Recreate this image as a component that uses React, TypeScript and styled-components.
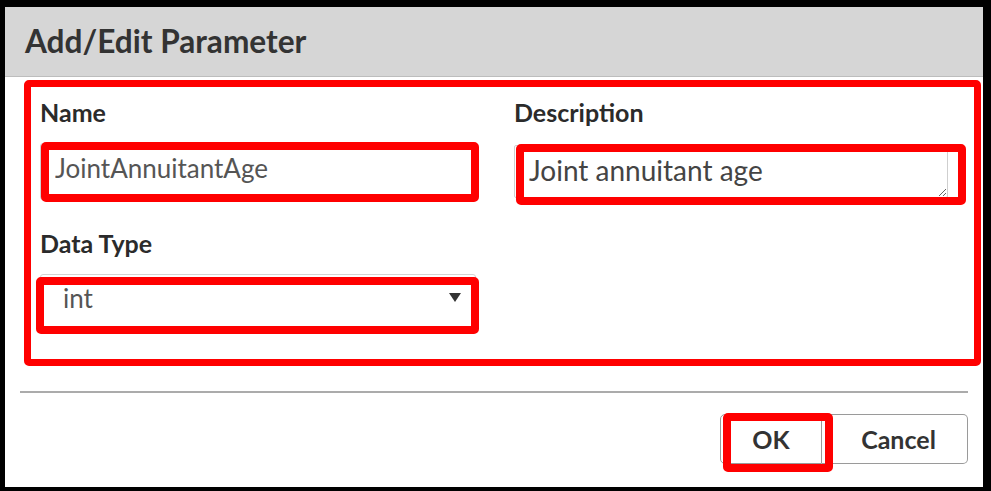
import React from "react";
import styled, { createGlobalStyle } from "styled-components";

const Global = createGlobalStyle`
  html, body { margin: 0; padding: 0; background: #000; }
  body { font-family: Lato, "Open Sans", Arial, sans-serif; }
  * { box-sizing: border-box; }
`;

const Screen = styled.div`
  width: 991px;
  height: 491px;
  padding: 7px 8px 4px 5px;
  background: #000;
`;

const Modal = styled.div`
  height: 480px;
  background: #fff;
  display: flex;
  flex-direction: column;
`;

const Header = styled.div`
  height: 70px;
  flex: none;
  background: #d6d6d6;
  border-bottom: 1px solid #bdbdbd;
  display: flex;
  align-items: center;
  padding: 0 20px 1px;
`;

const Title = styled.h1`
  margin: 0;
  font-size: 31.6px;
  font-weight: 700;
  color: #333;
`;

const Frame = styled.div`
  margin: 3px 2px 0 19px;
  border: 7px solid #ff0000;
  border-radius: 5px;
  padding: 11px 0 28px 9px;
  display: grid;
  grid-template-columns: 436px 434px;
  column-gap: 38px;
  row-gap: 29px;
`;

const Field = styled.div`
  display: flex;
  flex-direction: column;
`;

const Label = styled.label`
  font-size: 25px;
  line-height: 29px;
  font-weight: 700;
  color: #2b2b2b;
  margin-bottom: 16px;
`;

type Inset = { $t: number; $l: number; $r: number; $b: number };

const Marked = styled.div<Inset>`
  position: relative;
  &::after {
    content: "";
    position: absolute;
    top: ${(p) => p.$t}px;
    left: ${(p) => p.$l}px;
    right: ${(p) => p.$r}px;
    bottom: ${(p) => p.$b}px;
    border: 8px solid #ff0000;
    border-radius: 5px;
    pointer-events: none;
  }
`;

const TextInput = styled.input`
  display: block;
  width: 100%;
  height: 57px;
  border: 1px solid #cfcfcf;
  border-radius: 3px;
  padding: 0 14px 8px;
  font-family: Lato, sans-serif;
  font-size: 26px;
  color: #555;
  background: #fff;
  outline: none;
`;

const TextArea = styled.textarea`
  display: block;
  width: 100%;
  height: 53px;
  margin-top: 2px;
  border: 1px solid #cfcfcf;
  border-radius: 2px;
  padding: 7px 14px 0;
  font-family: Lato, sans-serif;
  font-size: 28px;
  line-height: 34px;
  color: #444;
  background: #fff;
  outline: none;
  resize: both;
  overflow: hidden;
`;

const SelectBox = styled.div`
  height: 57px;
  border: 1px solid #d4d4d4;
  border-radius: 3px;
  padding: 0 14px 10px 22px;
  display: flex;
  align-items: center;
  justify-content: space-between;
  font-size: 26px;
  color: #555;
  background: #fff;
`;

const Divider = styled.hr`
  margin: 25px 15px 0 15px;
  border: none;
  height: 2px;
  background: #ababab;
`;

const Footer = styled.div`
  display: flex;
  justify-content: flex-end;
  padding: 21px 15px 0 0;
`;

const ButtonGroup = styled.div`
  display: flex;
`;

const Button = styled.button<{ $pos: "left" | "right" }>`
  height: 50px;
  width: ${(p) => (p.$pos === "left" ? 102 : 146)}px;
  border: 1px solid #9a9a9a;
  border-left-width: ${(p) => (p.$pos === "right" ? 0 : 1)}px;
  border-radius: ${(p) => (p.$pos === "left" ? "5px 0 0 5px" : "0 5px 5px 0")};
  background: #fff;
  font-family: Lato, sans-serif;
  font-weight: 700;
  font-size: 25px;
  color: #333;
  padding: 0;
  padding-left: ${(p) => (p.$pos === "right" ? 8 : 0)}px;
`;

const Arrow = () => (
  <svg width="12" height="9" viewBox="0 0 12 9">
    <path d="M0 0 H12 L6 9 Z" fill="#333" />
  </svg>
);

export default function App() {
  return (
    <>
      <Global />
      <Screen>
        <Modal>
          <Header>
            <Title>Add/Edit Parameter</Title>
          </Header>
          <Frame>
            <Field>
              <Label>Name</Label>
              <Marked $t={-1} $l={1} $r={-3} $b={-2}>
                <TextInput defaultValue="JointAnnuitantAge" />
              </Marked>
            </Field>
            <Field>
              <Label>Description</Label>
              <Marked $t={1} $l={2} $r={-18} $b={-7}>
                <TextArea defaultValue="Joint annuitant age" />
              </Marked>
            </Field>
            <Field>
              <Label>Data Type</Label>
              <Marked $t={3} $l={-4} $r={-3} $b={-3}>
                <SelectBox>
                  <span>int</span>
                  <Arrow />
                </SelectBox>
              </Marked>
            </Field>
          </Frame>
          <Divider />
          <Footer>
            <ButtonGroup>
              <Marked $t={-1} $l={3} $r={-11} $b={-8}>
                <Button $pos="left">OK</Button>
              </Marked>
              <Button $pos="right">Cancel</Button>
            </ButtonGroup>
          </Footer>
        </Modal>
      </Screen>
    </>
  );
}
